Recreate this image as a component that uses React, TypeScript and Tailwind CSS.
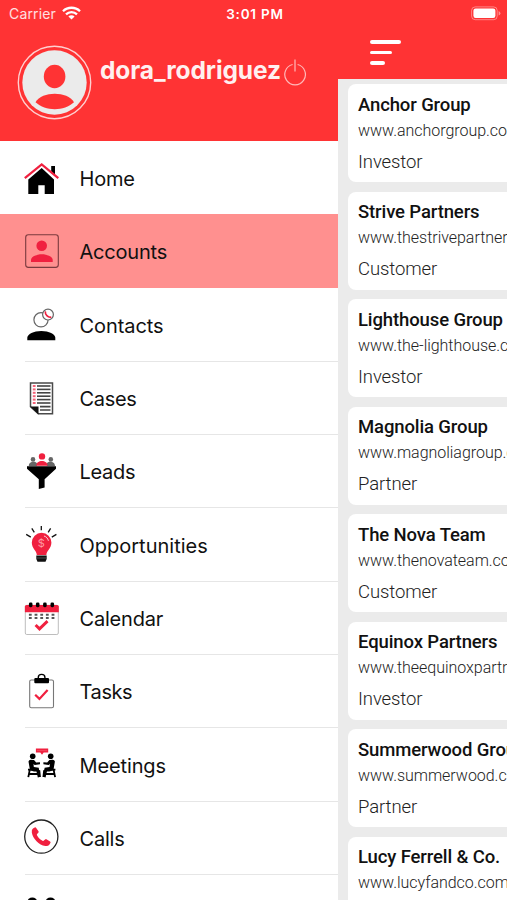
import type { ReactNode } from 'react';

const RED = '#f0203f';

interface MenuItem {
    label: string;
    icon: ReactNode;
    tracking?: string;
    active?: boolean;
    divider?: boolean;
}

interface Account {
    name: string;
    website: string;
    type: string;
}

function Icon({ children }: { children: ReactNode }) {
    return (
        <svg viewBox="0 0 38 38" width="38" height="38" fill="none" className="shrink-0">
            {children}
        </svg>
    );
}

const HomeIcon = () => (
    <Icon>
        <path d="M29.2 7h3.8v9l-3.8-3.6z" fill="#000" />
        <path d="M6.3 20.5 19.7 9 32 20.5V35h-9.3v-8.7h-6.4V35h-10z" fill="#000" />
        <path d="M2.8 19.2 19.7 5.4l16.6 13.8" stroke={RED} strokeWidth="2.2" />
    </Icon>
);

const AccountsIcon = () => (
    <Icon>
        <rect x="3.7" y="2.8" width="32.6" height="32.6" rx="2.6" stroke="#7a3a3e" strokeWidth="1.1" />
        <circle cx="19.7" cy="13.7" r="5.3" fill={RED} />
        <path d="M9 30v-2.2c0-3.4 6.2-5.6 10.8-5.6s10.9 2.2 10.9 5.6V30z" fill={RED} />
    </Icon>
);

const ContactsIcon = () => (
    <Icon>
        <circle cx="19" cy="14.8" r="7.1" stroke="#666" strokeWidth="1.2" />
        <circle cx="26" cy="9.6" r="5.4" fill="#fff" stroke="#666" strokeWidth="1.2" />
        <path d="M23.4 7c-.4 2.6 2.6 5.6 5.2 5.2" stroke={RED} strokeWidth="1.7" strokeLinecap="round" />
        <path d="M5.3 35.2v-2.4c0-4 6.4-6.9 14-6.9s14 2.9 14 6.9v2.4z" fill="#000" />
    </Icon>
);

const CasesIcon = () => (
    <Icon>
        <path d="M8.5 3.9h22v30.8H16.3l-7.8-7z" fill="#fff" stroke="#4a4a4a" strokeWidth="1.5" />
        <path d="M8 27.6h8.5v7.8z" fill="#111" />
        {[7, 10.4, 13.8, 17.2, 20.6, 24].map((y) => (
            <g key={y}>
                <path d={`M15 ${y}h13.5`} stroke="#444" strokeWidth="1.6" />
                <path d={`M10.8 ${y}h2.8`} stroke={RED} strokeWidth="2" opacity=".7" />
            </g>
        ))}
        <path d="M18 27.6h10.5M18 31h10.5" stroke="#444" strokeWidth="1.6" />
    </Icon>
);

const LeadsIcon = () => (
    <Icon>
        <circle cx="11" cy="7.4" r="2.3" fill="#666" />
        <circle cx="28.8" cy="7.4" r="2.3" fill="#666" />
        <path d="M6.8 14c0-5 7.2-5 8.2-2.5V14zM33 14c0-5-7.2-5-8.2-2.5V14z" fill="#666" />
        <circle cx="20" cy="4.4" r="3.2" fill={RED} />
        <path d="M14.2 13.8c0-6.4 11.4-6.4 11.4 0z" fill={RED} />
        <path d="M5 14.2h29v2.5L22.6 27.3v8.2L16.8 37v-9.7L5 16.7z" fill="#000" />
    </Icon>
);

const OpportunitiesIcon = () => (
    <Icon>
        <path
            d="M19.3.9v4.4M9.8 3.4l2.5 3.9M4.2 9.4l4.6 2.7M28.6 3.4l-2.4 3.9M34.4 9.4l-4.6 2.7"
            stroke="#111"
            strokeWidth="1.3"
        />
        <path d="M14.8 30c0-4-5-6.4-5-12.4a9.8 9.8 0 0 1 19.6 0c0 6-5 8.4-5 12.4z" fill={RED} />
        <path d="M22 11c2.3.7 3.9 2.4 4.4 4.8" stroke="#fff" strokeWidth="1" opacity=".8" />
        <text x="19.4" y="22" textAnchor="middle" fontSize="11" fontFamily="Inter, sans-serif" fill="#ff9aa5">$</text>
        <path d="M14.3 30.6h10.4v3.4l-1.2 2.8h-8l-1.2-2.8z" fill="#111" />
        <path d="M14.3 33h10.4" stroke="#777" strokeWidth=".6" />
    </Icon>
);

const CalendarIcon = () => (
    <Icon>
        <rect x="3.3" y="7.3" width="33" height="29.2" rx="1.5" fill="#fff" stroke="#b5b5b5" strokeWidth=".9" />
        <path d="M2.9 14.3V8.6q0-1.7 1.7-1.7h30.5q1.7 0 1.7 1.7v5.7z" fill={RED} />
        {[8.7, 15.7, 22.9, 30.3].map((x) => (
            <rect key={x} x={x - 1.8} y="4.5" width="3.6" height="4.7" rx="1.4" fill="#000" />
        ))}
        {[8.3, 14, 19.7, 25.3, 31].map((x) => (
            <path key={x} d={`M${x - 1.4} 16.8h2.8M${x - 1.4} 20h2.8`} stroke="#555" strokeWidth="2.1" />
        ))}
        <path d="M13.6 27l3.9 3.9 8-7.8" stroke={RED} strokeWidth="2.9" />
    </Icon>
);

const TasksIcon = () => (
    <Icon>
        <rect x="7.7" y="8" width="23.8" height="27.8" rx="1.6" fill="#fff" stroke="#777" strokeWidth="1.1" />
        <path d="M16.3 6.5V5.3a3.3 2.9 0 0 1 6.6 0v1.2" stroke="#000" strokeWidth="1.4" />
        <rect x="12.3" y="5.9" width="14.7" height="5.3" rx="1" fill="#000" />
        <path d="M13.2 22.8l4.2 4.1 8.2-9" stroke={RED} strokeWidth="2.2" />
    </Icon>
);

const MeetingPerson = () => (
    <>
        <circle cx="10.7" cy="11.3" r="2.8" fill="#000" />
        <path
            d="M6.5 16.5q.5-2 2.5-1.8l3 .3 2.2 2.6 3.8-.3v2l-5.3.7-1.2-1 .3 3 5 .8v2.2l1.4.2.7 6.8h-2.3l-.7-5.6H12l-4-1.2z"
            fill="#000"
        />
        <path d="M6 24.6h11M7.8 24.6 6.3 32.2M15 24.6l1.7 7.6M7.5 29h8.5" stroke="#000" strokeWidth="1.8" />
    </>
);

const MeetingsIcon = () => (
    <Icon>
        <path d="M13.9 3.6h12.3v4h-4.5L20 9.8l-1.7-2.2h-4.4z" fill={RED} />
        <path d="M15.5 5.6h9" stroke="#ff8c9b" strokeWidth=".7" strokeDasharray="1 1" />
        <MeetingPerson />
        <g transform="matrix(-1 0 0 1 39.4 0)">
            <MeetingPerson />
        </g>
    </Icon>
);

const CallsIcon = () => (
    <Icon>
        <circle cx="19.3" cy="18.6" r="16.6" stroke="#222" strokeWidth="1.3" />
        <path
            d="M11 10.6l1.7-1.1q.9-.5 1.5.4l2.3 3.3q.5.9-.2 1.6l-1.2 1.1q-.5.6-.1 1.3c1.2 2.3 3.2 4.3 5.5 5.5q.8.4 1.4-.1l1.2-1.1q.8-.7 1.7-.1l3.3 2.2q.9.6.3 1.5l-1.1 1.7q-1.2 1.6-3.9 1.2C16.8 26.8 11 20.9 9.8 14.4q-.4-2.6 1.2-3.8z"
            fill={RED}
        />
    </Icon>
);

const UsersIcon = () => (
    <Icon>
        <circle cx="10.3" cy="10.4" r="5" fill="#000" />
        <circle cx="28.5" cy="10.4" r="5" fill="#000" />
    </Icon>
);

const menuItems: MenuItem[] = [
    { label: 'Home', icon: <HomeIcon />, tracking: 'tracking-[-0.2px]' },
    { label: 'Accounts', icon: <AccountsIcon />, tracking: 'tracking-[-0.2px]', active: true },
    { label: 'Contacts', icon: <ContactsIcon />, tracking: 'tracking-[-0.08px]', divider: true },
    { label: 'Cases', icon: <CasesIcon />, tracking: 'tracking-[-0.3px]', divider: true },
    { label: 'Leads', icon: <LeadsIcon />, tracking: 'tracking-[-0.3px]', divider: true },
    { label: 'Opportunities', icon: <OpportunitiesIcon />, divider: true },
    { label: 'Calendar', icon: <CalendarIcon />, tracking: 'tracking-[-0.2px]', divider: true },
    { label: 'Tasks', icon: <TasksIcon />, tracking: 'tracking-[-0.4px]', divider: true },
    { label: 'Meetings', icon: <MeetingsIcon />, tracking: 'tracking-[-0.12px]', divider: true },
    { label: 'Calls', icon: <CallsIcon />, tracking: 'tracking-[-0.2px]', divider: true },
    { label: '', icon: <UsersIcon /> },
];

const accounts: Account[] = [
    { name: 'Anchor Group', website: 'www.anchorgroup.com', type: 'Investor' },
    { name: 'Strive Partners', website: 'www.thestrivepartners.com', type: 'Customer' },
    { name: 'Lighthouse Group', website: 'www.the-lighthouse.com', type: 'Investor' },
    { name: 'Magnolia Group', website: 'www.magnoliagroup.com', type: 'Partner' },
    { name: 'The Nova Team', website: 'www.thenovateam.com', type: 'Customer' },
    { name: 'Equinox Partners', website: 'www.theequinoxpartners.com', type: 'Investor' },
    { name: 'Summerwood Group', website: 'www.summerwood.com', type: 'Partner' },
    { name: 'Lucy Ferrell & Co.', website: 'www.lucyfandco.com', type: 'Investor' },
];

function StatusBar() {
    return (
        <div className="grid h-7 shrink-0 grid-cols-[1fr_auto_1fr] items-center bg-[#ff3334] pl-[9px] pr-[6px] text-white">
            <div className="flex items-center gap-[6px]">
                <span className="-mt-px text-[14px] tracking-[0.15px] text-white/85">Carrier</span>
                <svg viewBox="0 0 19 14" width="19" height="14" fill="none" stroke="#fff" strokeWidth="2.3" className="-mt-[2px]">
                    <path d="M1 5.2a12.2 12.2 0 0 1 17 0M4 8.4a7.900 7.900 0 0 1 11 0" />
                    <path d="M9.5 13.5 6.4 10.6a4.4 4.4 0 0 1 6.2 0z" fill="#fff" stroke="none" />
                </svg>
            </div>
            <span className="text-[13.5px] font-semibold tracking-[0.8px]">3:01 PM</span>
            <svg viewBox="0 0 30 15" width="30" height="15" className="-mt-[2px] justify-self-end">
                <rect x=".6" y=".9" width="25.6" height="12.8" rx="3.6" fill="none" stroke="#fff" strokeOpacity=".4" />
                <rect x="2.4" y="2.6" width="22" height="9.4" rx="2.2" fill="#fff" />
                <path d="M27.6 5v4.6q1.800-.7 1.800-2.300T27.600 5z" fill="#fff" fillOpacity=".45" />
            </svg>
        </div>
    );
}

function Sidebar() {
    return (
        <aside className="w-[338px] shrink-0 bg-white">
            <div className="flex h-[113px] items-start bg-[#ff3334] pl-[17px] pt-[17px]">
                <svg viewBox="0 0 76 76" width="76" height="76" className="shrink-0">
                    <circle cx="37.5" cy="37.5" r="36.2" fill="none" stroke="#ffd0d0" strokeWidth="1.4" />
                    <circle cx="37.5" cy="37.5" r="32.2" fill="#ebebeb" />
                    <ellipse cx="37.6" cy="31.5" rx="10.8" ry="11.8" fill="#ff3334" />
                    <path d="M18.5 57.3C25 46 50.5 46 57 57.3 47 66.5 28.5 66.5 18.5 57.3z" fill="#ff3334" />
                </svg>
                <span className="ml-[7px] mt-[9px] text-[24.5px] font-bold leading-[32px] tracking-[-0.1px] text-[#fff0f0]">
                    dora_rodriguez
                </span>
                <svg viewBox="0 0 24 28" width="24" height="28" fill="none" stroke="#ffb9b9" strokeWidth="1.2" className="ml-[2px] mt-[13px]">
                    <path d="M9.6 6.5a10.3 10.3 0 1 0 5 0M12 1.5v12" />
                </svg>
            </div>
            <nav>
                {menuItems.map((item) => (
                    <div
                        key={item.label}
                        className={`relative flex h-[73.3px] items-center pl-[22px] ${item.active ? 'bg-[#ff908f]' : ''}`}
                    >
                        {item.icon}
                        <span className={`ml-[19.5px] mt-[3px] text-[20px] leading-6 text-[#111] ${item.tracking ?? ''}`}>
                            {item.label}
                        </span>
                        {item.divider && <div className="absolute -bottom-px left-[25px] right-0 h-px bg-[#e6e6e6]" />}
                    </div>
                ))}
            </nav>
        </aside>
    );
}

function AccountCard({ account }: { account: Account }) {
    return (
        <div className="h-[98px] shrink-0 whitespace-nowrap rounded-l-[8px] bg-white pl-[10px] pt-[9.5px] font-['Roboto',sans-serif]">
            <h2 className="text-[18.5px] font-medium leading-[22px] tracking-[-0.12px] text-[#111]">{account.name}</h2>
            <p className="mt-[5px] text-[16px] font-light leading-5 tracking-[-0.03px] text-[#222]">{account.website}</p>
            <p className="mt-[10px] text-[18.5px] font-light leading-[22px] tracking-[-0.1px] text-[#222]">{account.type}</p>
        </div>
    );
}

export default function App() {
    return (
        <div className="flex h-[900px] w-[507px] flex-col overflow-hidden bg-white font-['Inter',sans-serif]">
            <StatusBar />
            <div className="flex min-h-0 flex-1">
                <Sidebar />
                <main className="flex min-w-0 flex-1 flex-col overflow-hidden">
                    <header className="h-[51px] shrink-0 bg-[#ff3334] pl-[32px] pt-[12px]">
                        <div className="flex flex-col gap-[7px]">
                            <div className="h-[3.5px] w-[30.5px] rounded-full bg-white" />
                            <div className="h-[3.5px] w-[22px] rounded-full bg-white" />
                            <div className="h-[3.5px] w-[15px] rounded-full bg-white" />
                        </div>
                    </header>
                    <div className="flex min-h-0 flex-1 flex-col gap-[9.5px] bg-[#ebebeb] pl-[10px] pt-[5px]">
                        {accounts.map((account) => (
                            <AccountCard key={account.name} account={account} />
                        ))}
                    </div>
                </main>
            </div>
        </div>
    );
}
